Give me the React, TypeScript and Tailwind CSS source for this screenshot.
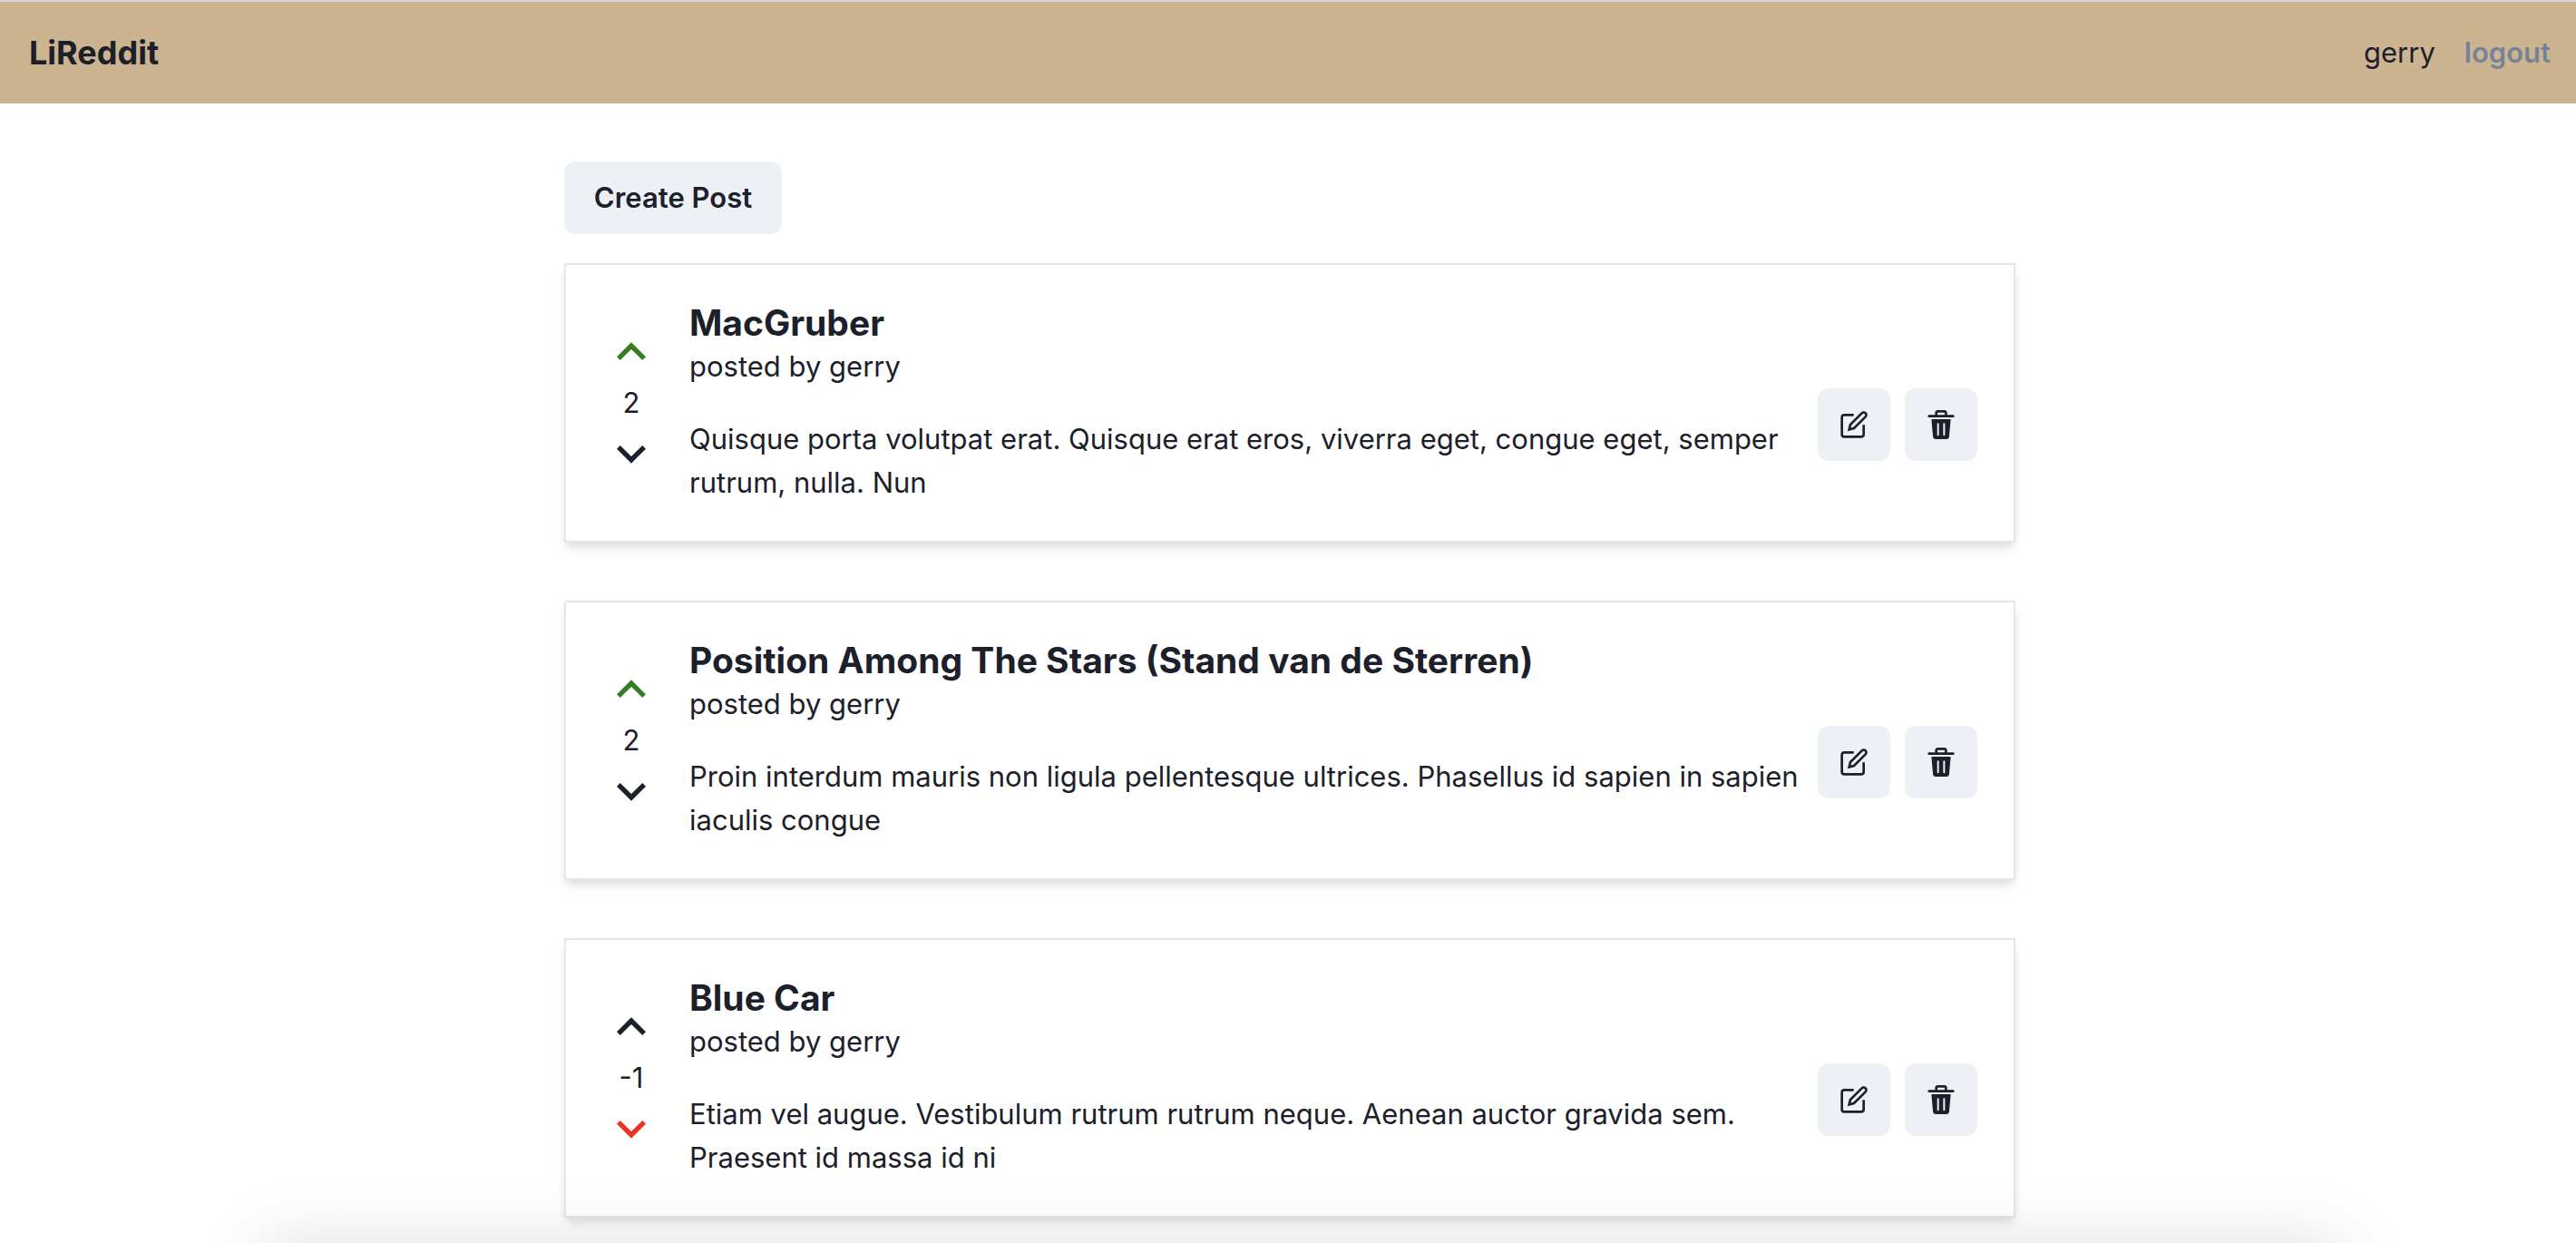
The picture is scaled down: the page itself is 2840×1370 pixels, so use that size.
type Vote = "up" | "down";

interface Post {
  id: number;
  title: string;
  author: string;
  snippet: string;
  points: number;
  vote: Vote;
}

const posts: Post[] = [
  {
    id: 1,
    title: "MacGruber",
    author: "gerry",
    snippet:
      "Quisque porta volutpat erat. Quisque erat eros, viverra eget, congue eget, semper rutrum, nulla. Nun",
    points: 2,
    vote: "up",
  },
  {
    id: 2,
    title: "Position Among The Stars (Stand van de Sterren)",
    author: "gerry",
    snippet:
      "Proin interdum mauris non ligula pellentesque ultrices. Phasellus id sapien in sapien iaculis congue",
    points: 2,
    vote: "up",
  },
  {
    id: 3,
    title: "Blue Car",
    author: "gerry",
    snippet:
      "Etiam vel augue. Vestibulum rutrum rutrum neque. Aenean auctor gravida sem. Praesent id massa id ni",
    points: -1,
    vote: "down",
  },
];

function ChevronUp() {
  return (
    <svg viewBox="0 0 24 24" className="size-16" fill="currentColor" aria-hidden="true">
      <path d="M12 8l-6 6 1.41 1.41L12 10.83l4.59 4.58L18 14z" />
    </svg>
  );
}

function ChevronDown() {
  return (
    <svg viewBox="0 0 24 24" className="size-16" fill="currentColor" aria-hidden="true">
      <path d="M16.59 8.59L12 13.17 7.41 8.59 6 10l6 6 6-6z" />
    </svg>
  );
}

function EditIcon() {
  return (
    <svg
      viewBox="0 0 24 24"
      className="size-8"
      fill="none"
      stroke="currentColor"
      strokeWidth="2"
      strokeLinecap="round"
      aria-hidden="true"
    >
      <path d="M11 4H4a2 2 0 0 0-2 2v14a2 2 0 0 0 2 2h14a2 2 0 0 0 2-2v-7" />
      <path d="M18.5 2.5a2.121 2.121 0 0 1 3 3L12 15l-4 1 1-4 9.5-9.5z" />
    </svg>
  );
}

function DeleteIcon() {
  return (
    <svg viewBox="0 0 24 24" className="size-8" fill="currentColor" aria-hidden="true">
      <path d="M19.452 7.5H4.547a.5.5 0 0 0-.5.545l1.287 14.136A2 2 0 0 0 7.326 24h9.347a2 2 0 0 0 1.992-1.819L19.95 8.045a.5.5 0 0 0-.129-.382.5.5 0 0 0-.369-.163zm-9.2 13a.75.75 0 0 1-1.5 0v-9a.75.75 0 0 1 1.5 0zm5 0a.75.75 0 0 1-1.5 0v-9a.75.75 0 0 1 1.5 0zM22 4h-4.75a.25.25 0 0 1-.25-.25V2.5A2.5 2.5 0 0 0 14.5 0h-5A2.5 2.5 0 0 0 7 2.5v1.25a.25.25 0 0 1-.25.25H2a1 1 0 0 0 0 2h20a1 1 0 0 0 0-2zM9 3.75V2.5a.5.5 0 0 1 .5-.5h5a.5.5 0 0 1 .5.5v1.25a.25.25 0 0 1-.25.25h-5.5A.25.25 0 0 1 9 3.75z" />
    </svg>
  );
}

function NavBar() {
  return (
    <header className="flex items-center justify-between border-t-2 border-[#d4d7e0] bg-[#cdb491] py-8 pr-7 pl-8">
      <h1 className="text-[36px] leading-12 font-bold">
        <a href="#home">LiReddit</a>
      </h1>
      <div className="flex items-center gap-8">
        <span>gerry</span>
        <button type="button" className="font-semibold text-[#758398]">
          logout
        </button>
      </div>
    </header>
  );
}

function VoteControls({ points, vote }: { points: number; vote: Vote }) {
  return (
    <div className="flex shrink-0 flex-col items-center justify-center">
      <button
        type="button"
        aria-label="Upvote"
        className={vote === "up" ? "text-[#377e22]" : "text-[#1c202b]"}
      >
        <ChevronUp />
      </button>
      <span>{points}</span>
      <button
        type="button"
        aria-label="Downvote"
        className={vote === "down" ? "text-[#ea3323]" : "text-[#1c202b]"}
      >
        <ChevronDown />
      </button>
    </div>
  );
}

function PostCard({ post }: { post: Post }) {
  return (
    <article className="flex gap-8 border-2 border-[#e2e7ed] bg-white p-10 shadow-[0_8px_12px_-2px_rgba(0,0,0,0.1),0_4px_8px_-2px_rgba(0,0,0,0.06)]">
      <VoteControls points={post.points} vote={post.vote} />
      <div className="min-w-0 flex-1">
        <h2 className="text-[39px] leading-12 font-bold">
          <a href={`#post-${post.id}`}>{post.title}</a>
        </h2>
        <div className="flex items-center gap-4">
          <div className="flex-1">
            <p>posted by {post.author}</p>
            <p className="mt-8">{post.snippet}</p>
          </div>
          <div className="flex shrink-0 gap-4">
            <button
              type="button"
              aria-label="Edit post"
              className="grid size-20 place-items-center rounded-xl bg-[#edf0f5]"
            >
              <EditIcon />
            </button>
            <button
              type="button"
              aria-label="Delete post"
              className="grid size-20 place-items-center rounded-xl bg-[#edf0f5]"
            >
              <DeleteIcon />
            </button>
          </div>
        </div>
      </div>
    </article>
  );
}

export default function App() {
  return (
    <div className="min-h-screen bg-white font-['Inter',sans-serif] text-[31px] leading-12 text-[#1c202b]">
      <NavBar />
      <main className="pt-16 pb-7 pl-1">
        <div className="mx-auto flex max-w-[1600px] flex-col items-start gap-8">
          <button type="button" className="h-20 min-w-60 rounded-xl bg-[#edf0f5] px-8 font-semibold">
            Create Post
          </button>
          <div className="flex w-full flex-col gap-16">
            {posts.map((post) => (
              <PostCard key={post.id} post={post} />
            ))}
          </div>
        </div>
      </main>
      <div className="pointer-events-none fixed top-full right-64 left-72 h-40 shadow-[0_0_72px_rgba(0,0,0,0.13)]" />
    </div>
  );
}
